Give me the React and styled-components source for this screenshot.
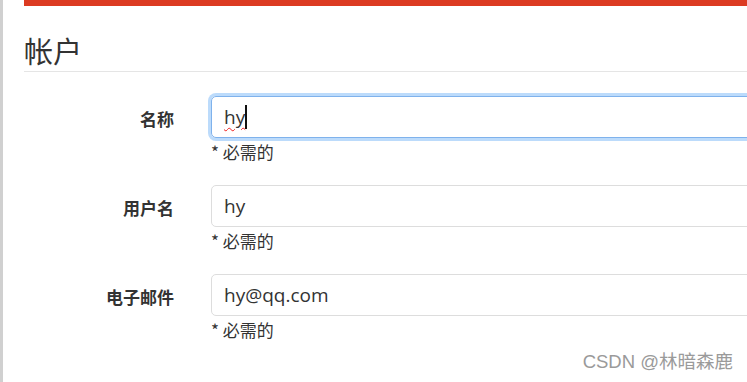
import React from "react"
import styled, { createGlobalStyle } from "styled-components"

const GlobalStyle = createGlobalStyle`
  html, body {
    margin: 0;
    padding: 0;
    background: #fff;
    overflow: hidden;
  }
  body {
    font-family: "Noto Sans CJK SC", "Open Sans", sans-serif;
    color: #333;
  }
`

const Page = styled.div`
  position: relative;
  width: 747px;
  height: 382px;
  border-left: 3px solid #d0d0d0;
  box-sizing: border-box;
  padding-left: 21px;
  overflow: hidden;
`

const TopBar = styled.div`
  height: 6px;
  background: #dc3b22;
`

const Heading = styled.h2`
  margin: 0;
  padding: 24px 0 0;
  height: 41px;
  font-size: 29px;
  font-weight: 400;
  line-height: 40px;
  color: #333;
  font-family: "Noto Sans CJK SC", sans-serif;
  border-bottom: 1px solid #e5e5e5;
`

const Form = styled.form`
  display: flex;
  flex-direction: column;
  gap: 20px;
  padding-top: 24px;
`

const Row = styled.div`
  display: grid;
  grid-template-columns: 150px 1fr;
  column-gap: 37px;
  align-items: start;
`

const Label = styled.label`
  text-align: right;
  font-weight: 700;
  font-size: 17px;
  line-height: 46px;
  color: #333;
  font-family: "Noto Sans CJK SC", sans-serif;
`

const Field = styled.div`
  display: flex;
  flex-direction: column;
  margin-right: -30px;
`

const Input = styled.div`
  height: 42px;
  box-sizing: border-box;
  border: 1px solid ${p => (p.$focus ? "#7fb2ec" : "#ddd")};
  border-radius: 5px;
  padding: 0 12px;
  font-family: "Open Sans", "Noto Sans CJK SC", sans-serif;
  font-size: 19px;
  line-height: 40px;
  color: #333;
  box-shadow: ${p => (p.$focus ? "0 0 0 3px #bcdbfb" : "none")};
  display: flex;
  align-items: center;
`

const Typed = styled.span`
  text-decoration: underline wavy #e22;
  text-decoration-thickness: 1px;
  text-underline-offset: 3px;
`

const Caret = styled.span`
  display: inline-block;
  width: 2px;
  height: 24px;
  background: #111;
`

const Help = styled.div`
  font-size: 17px;
  line-height: 27px;
  color: #333;
  font-family: "Noto Sans CJK SC", sans-serif;
`

const Watermark = styled.div`
  position: absolute;
  right: 14px;
  bottom: 9px;
  font-family: "Liberation Sans", "Noto Sans CJK SC", sans-serif;
  font-size: 18.5px;
  color: #9a9a9a;
`

const rows = [
  { label: "名称", value: "hy", focus: true },
  { label: "用户名", value: "hy" },
  { label: "电子邮件", value: "hy@qq.com" },
]

export default function App() {
  return (
    <>
      <GlobalStyle />
      <Page>
        <TopBar />
        <Heading>帐户</Heading>
        <Form>
          {rows.map(r => (
            <Row key={r.label}>
              <Label>{r.label}</Label>
              <Field>
                <Input $focus={r.focus}>
                  {r.focus ? (
                    <>
                      <Typed>{r.value}</Typed>
                      <Caret />
                    </>
                  ) : (
                    r.value
                  )}
                </Input>
                <Help>* 必需的</Help>
              </Field>
            </Row>
          ))}
        </Form>
        <Watermark>CSDN @林暗森鹿</Watermark>
      </Page>
    </>
  )
}
